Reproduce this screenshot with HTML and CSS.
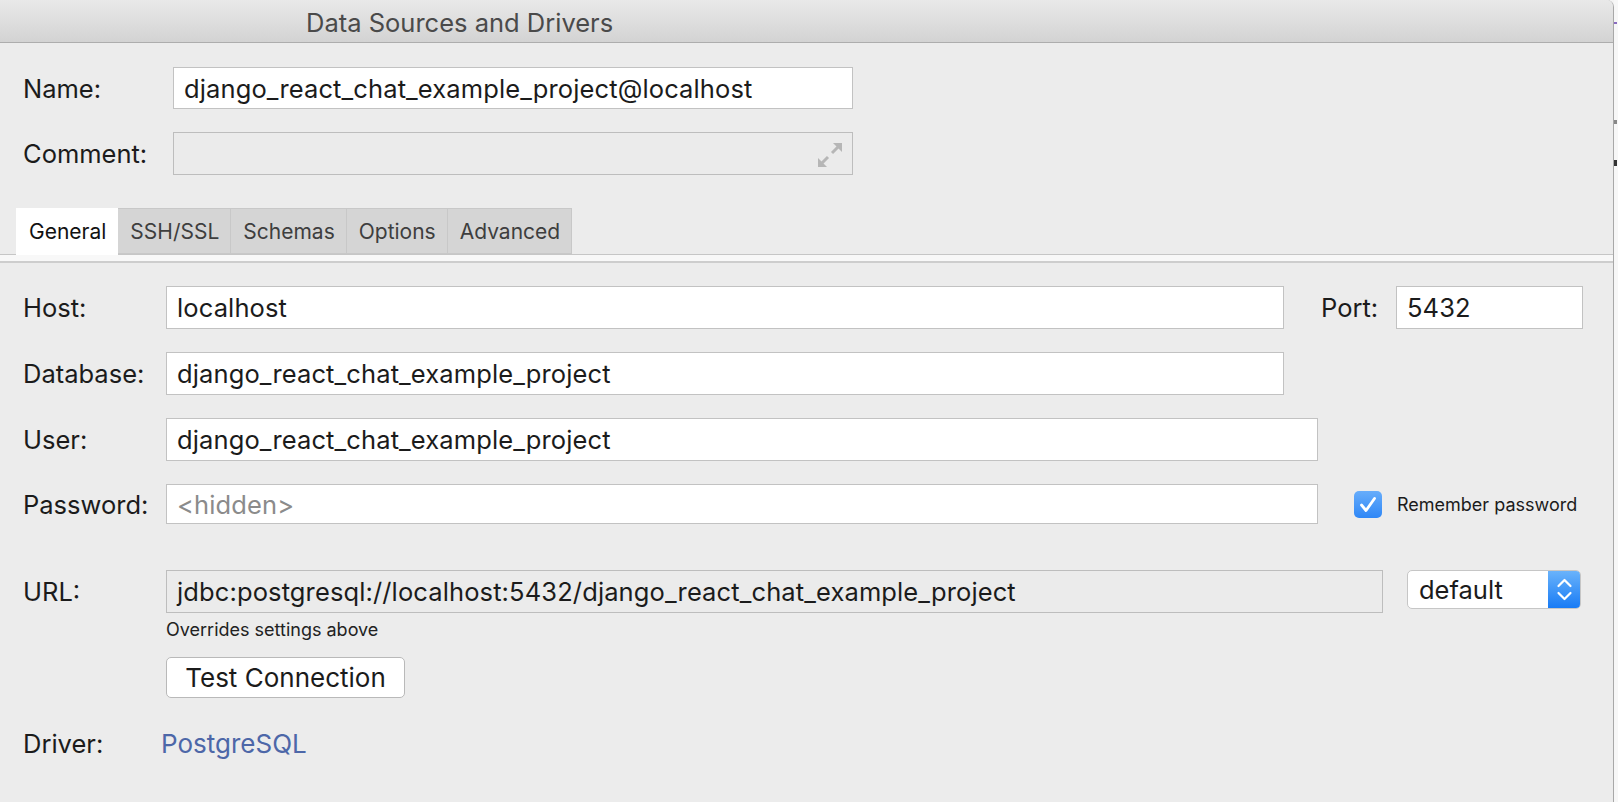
FILE: index.html
```html
<!DOCTYPE html>
<html>
<head>
<meta charset="utf-8">
<title>Data Sources and Drivers</title>
<link rel="stylesheet" href="styles.css">
</head>
<body>
<div class="window">
  <header class="titlebar"><span class="title">Data Sources and Drivers</span></header>

  <section class="top">
    <div class="row">
      <label class="lbl lbl-top">Name:</label>
      <div class="field field-top">django_react_chat_example_project@localhost</div>
    </div>
    <div class="row row-comment">
      <label class="lbl lbl-top">Comment:</label>
      <div class="field field-top field-disabled field-comment">
        <svg class="expand" width="24" height="24" viewBox="0 0 24 24">
          <path d="M24 0 L24 9 L15 0 Z" fill="#b6b6b6"/>
          <path d="M20.5 3.5 L14 10" stroke="#b6b6b6" stroke-width="3"/>
          <path d="M0 24 L0 15 L9 24 Z" fill="#b6b6b6"/>
          <path d="M3.5 20.5 L10 14" stroke="#b6b6b6" stroke-width="3"/>
        </svg>
      </div>
    </div>
  </section>

  <nav class="tabs">
    <div class="tab active">General</div>
    <div class="tab">SSH/SSL</div>
    <div class="tab">Schemas</div>
    <div class="tab">Options</div>
    <div class="tab">Advanced</div>
  </nav>
  <div class="tab-sep"></div>

  <section class="form">
    <div class="row">
      <label class="lbl">Host:</label>
      <div class="field w-host">localhost</div>
      <label class="lbl-port">Port:</label>
      <div class="field w-port">5432</div>
    </div>
    <div class="row mt">
      <label class="lbl">Database:</label>
      <div class="field w-host">django_react_chat_example_project</div>
    </div>
    <div class="row mt">
      <label class="lbl">User:</label>
      <div class="field w-user">django_react_chat_example_project</div>
    </div>
    <div class="row mt">
      <label class="lbl">Password:</label>
      <div class="field w-user field-pw placeholder">&lt;hidden&gt;</div>
      <span class="checkbox">
        <svg width="28" height="27" viewBox="0 0 28 27">
          <path d="M7.5 14 L12 19.5 L20.5 7.5" fill="none" stroke="#fff" stroke-width="2.8" stroke-linecap="round" stroke-linejoin="round"/>
        </svg>
      </span>
      <span class="check-label">Remember password</span>
    </div>
    <div class="row row-url">
      <label class="lbl lbl-url">URL:</label>
      <div class="field w-url field-disabled">jdbc:postgresql://localhost:5432/django_react_chat_example_project</div>
      <div class="select">
        <span class="select-text">default</span>
        <span class="select-btn">
          <svg width="33" height="39" viewBox="0 0 33 39">
            <path d="M10.5 16 L16.5 10 L22.5 16" fill="none" stroke="#fff" stroke-width="2.2" stroke-linecap="round" stroke-linejoin="round"/>
            <path d="M10.5 23 L16.5 29 L22.5 23" fill="none" stroke="#fff" stroke-width="2.2" stroke-linecap="round" stroke-linejoin="round"/>
          </svg>
        </span>
      </div>
    </div>
    <div class="hint">Overrides settings above</div>
    <button class="btn">Test Connection</button>
    <div class="row row-driver">
      <label class="lbl">Driver:</label>
      <a class="link">PostgreSQL</a>
    </div>
  </section>
</div>
<div class="backdrop">
  <span class="speck s1"></span>
  <span class="speck s2"></span>
  <span class="speck s3"></span>
</div>
</body>
</html>
```

FILE: styles.css
```css
* { box-sizing: border-box; }

html, body {
  margin: 0;
  padding: 0;
  width: 1618px;
  height: 802px;
  overflow: hidden;
}

body {
  display: flex;
  background: #f4f4f4;
  font-family: Inter, "Liberation Sans", Arial, sans-serif;
  color: #1b1b1b;
}

.window {
  width: 1614px;
  height: 802px;
  flex: none;
  background: #ececec;
  border-right: 1px solid #a8a8a8;
  border-top-right-radius: 7px;
  overflow: hidden;
}

.backdrop {
  flex: 1;
  position: relative;
  background: #f7f7f7;
}
.speck {
  position: absolute;
  left: 0;
  width: 3px;
  background: #555;
}
.s1 { top: 22px; height: 2px; background: #8a6cc0; }
.s2 { top: 120px; height: 4px; background: #888; }
.s3 { top: 160px; height: 6px; background: #333; }

.titlebar {
  height: 43px;
  background: linear-gradient(#e9e9e9, #d3d3d3);
  border-bottom: 1px solid #adadad;
  display: flex;
  align-items: center;
  padding: 3px 0 0 306px;
}
.title {
  font-size: 25.5px;
  color: #4a4a4a;
}

.top {
  padding: 24px 0 0 23px;
}

.row {
  display: flex;
  align-items: center;
}
.row-comment { margin-top: 23px; }

.lbl {
  width: 143px;
  flex: none;
  font-size: 25.5px;
  color: #1b1b1b;
}
.lbl-top { width: 150px; }

.field {
  height: 43px;
  flex: none;
  background: #fff;
  border: 1px solid #c2c2c2;
  display: flex;
  align-items: center;
  padding-left: 10px;
  font-size: 25.5px;
  letter-spacing: 0.12px;
  color: #1b1b1b;
  white-space: nowrap;
  overflow: hidden;
}
.field-top { width: 680px; height: 42px; }
.field-comment { height: 43px; position: relative; }
.field-disabled { background: #ebebeb; border-color: #bdbdbd; }
.expand { position: absolute; right: 10px; top: 10px; }

.tabs {
  margin-top: 33px;
  display: flex;
  padding-left: 16px;
  border-bottom: 1px solid #c6c6c6;
  height: 47px;
}
.tab {
  height: 46px;
  padding: 0 11px 0 12px;
  background: #d5d5d5;
  border: 1px solid #c8c8c8;
  border-left: none;
  display: flex;
  align-items: center;
  font-size: 21px;
  color: #3e3e3e;
}
.tab.active {
  background: #fff;
  color: #111;
  border-color: #fff;
  height: 47px;
  padding: 0 11px 0 13px;
}
.tab-sep {
  height: 8px;
  background: #f8f8f8;
  border-bottom: 2px solid #cdcdcd;
}

.form {
  padding: 23px 0 0 23px;
}
.mt { margin-top: 23px; }

.w-host { width: 1118px; }
.w-user { width: 1152px; }
.w-url { width: 1217px; }
.w-port { width: 187px; }
.field-pw { height: 40px; }

.lbl-port {
  margin-left: 37px;
  width: 75px;
  font-size: 25.5px;
  color: #1b1b1b;
}

.placeholder { color: #8b8b8b; }

.checkbox {
  margin-left: 36px;
  width: 28px;
  height: 27px;
  border-radius: 5px;
  background: linear-gradient(#67adfb, #2f87f6);
  display: flex;
}
.check-label {
  margin-left: 15px;
  font-size: 18px;
  color: #1b1b1b;
}

.row-url {
  margin-top: 46px;
  align-items: flex-start;
}
.lbl-url {
  height: 43px;
  line-height: 43px;
}
.select {
  margin-left: 24px;
  width: 174px;
  height: 39px;
  display: flex;
  border: 1px solid #c6c6c6;
  border-radius: 5px;
  background: #fff;
  overflow: hidden;
}
.select-text {
  flex: 1;
  padding-left: 11px;
  display: flex;
  align-items: center;
  font-size: 25.5px;
  color: #1b1b1b;
}
.select-btn {
  width: 33px;
  margin: -1px -1px -1px 0;
  background: linear-gradient(#6cb4fb, #167af5);
  display: flex;
}

.hint {
  margin: 7px 0 0 143px;
  height: 20px;
  line-height: 20px;
  font-size: 18px;
  color: #222;
}

.btn {
  display: block;
  margin: 17px 0 0 143px;
  width: 239px;
  height: 41px;
  background: #fff;
  border: 1px solid #b9b9b9;
  border-radius: 5px;
  font-family: inherit;
  font-size: 26px;
  color: #1b1b1b;
  padding: 0;
}

.row-driver {
  margin-top: 30px;
  height: 30px;
}
.row-driver .lbl { width: 138px; }
.link {
  font-size: 26px;
  color: #4d67a8;
}
```
